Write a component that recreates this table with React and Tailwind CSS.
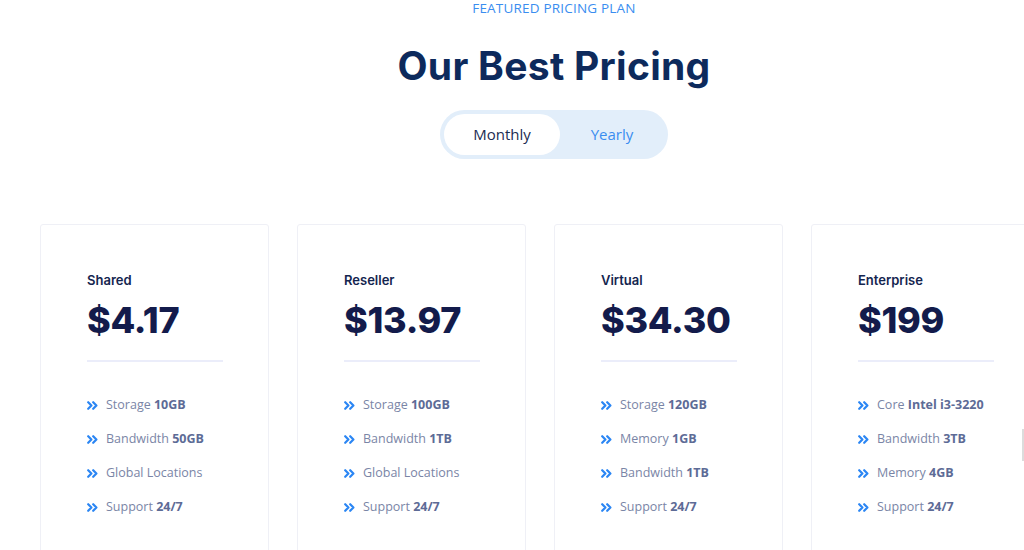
import React, { useState } from 'react';

const plans = [
  {
    name: 'Shared',
    price: '$4.17',
    features: [
      ['Storage', '10GB'],
      ['Bandwidth', '50GB'],
      ['Global Locations', ''],
      ['Support', '24/7'],
    ],
  },
  {
    name: 'Reseller',
    price: '$13.97',
    features: [
      ['Storage', '100GB'],
      ['Bandwidth', '1TB'],
      ['Global Locations', ''],
      ['Support', '24/7'],
    ],
  },
  {
    name: 'Virtual',
    price: '$34.30',
    features: [
      ['Storage', '120GB'],
      ['Memory', '1GB'],
      ['Bandwidth', '1TB'],
      ['Support', '24/7'],
    ],
  },
  {
    name: 'Enterprise',
    price: '$199',
    features: [
      ['Core', 'Intel i3-3220'],
      ['Bandwidth', '3TB'],
      ['Memory', '4GB'],
      ['Support', '24/7'],
    ],
  },
];

// double chevron bullet
function Arrows() {
  return (
    <svg width="11" height="9" viewBox="0 0 11 9" fill="none" className="shrink-0">
      <path d="M1.2 1.2 L4.4 4.5 L1.2 7.8" stroke="#2b86f4" strokeWidth="2.2" strokeLinecap="round" strokeLinejoin="round" />
      <path d="M6.2 1.2 L9.4 4.5 L6.2 7.8" stroke="#2b86f4" strokeWidth="2.2" strokeLinecap="round" strokeLinejoin="round" />
    </svg>
  );
}

export default function App() {
  const [period, setPeriod] = useState('monthly');

  return (
    <div className="relative w-[1024px] h-[550px] overflow-hidden bg-white font-['Inter',sans-serif]">
      <div className="w-[1108px]">
        {/* HEADER */}
        <div className="flex flex-col items-center">
          <p className="pt-[1px] text-[13.5px] leading-[15px] tracking-[0.2px] text-[#3a8df0] font-['Open_Sans',sans-serif]">
            FEATURED PRICING PLAN
          </p>
          <h2 className="mt-[26px] text-[39px] leading-[48px] font-bold text-[#0d2a5c] tracking-[0.3px]">
            Our Best Pricing
          </h2>
          <div className="mt-[20px] flex items-center w-[228px] h-[49px] rounded-full bg-[#e2eefa] p-[4px] font-['Open_Sans',sans-serif]">
            <button
              onClick={() => setPeriod('monthly')}
              className={`w-[116px] h-[41px] rounded-full text-[15px] ${period === 'monthly' ? 'bg-white text-[#1c2c52]' : 'text-[#3a8df0]'}`}
            >
              Monthly
            </button>
            <button
              onClick={() => setPeriod('yearly')}
              className={`flex-1 h-[41px] rounded-full text-[15px] ${period === 'yearly' ? 'bg-white text-[#1c2c52]' : 'text-[#3a8df0]'}`}
            >
              Yearly
            </button>
          </div>
        </div>

        {/* CARDS */}
        <div className="mt-[65px] pl-[40px] flex gap-[28px]">
          {plans.map((plan) => (
            <div key={plan.name} className="w-[229px] h-[340px] shrink-0 rounded-[3px] border border-[#eff0f6] bg-white pl-[46px] pt-[47px]">
              <div className="text-[13px] leading-[16px] font-semibold text-[#14254f]">{plan.name}</div>
              <div className="mt-[12px] text-[36px] leading-[40px] font-extrabold text-[#131b4b] tracking-[-0.3px]">{plan.price}</div>
              <div className="mt-[20px] w-[136px] h-[2px] bg-[#ebedfa]" />
              <ul className="mt-[35px] flex flex-col gap-[18px] font-['Open_Sans',sans-serif]">
                {plan.features.map(([label, value]) => (
                  <li key={label} className="flex items-center gap-[8px] h-[16px] text-[12.5px] text-[#7a85a6]">
                    <Arrows />
                    <span>
                      {label}
                      {value && <span className="font-bold text-[#5d6b96]"> {value}</span>}
                    </span>
                  </li>
                ))}
              </ul>
            </div>
          ))}
        </div>
      </div>

      {/* edge of a floating control at the right */}
      <div className="absolute left-[1022px] top-[429px] w-[2px] h-[32px] bg-[#dcdcdc]" />
    </div>
  );
}
